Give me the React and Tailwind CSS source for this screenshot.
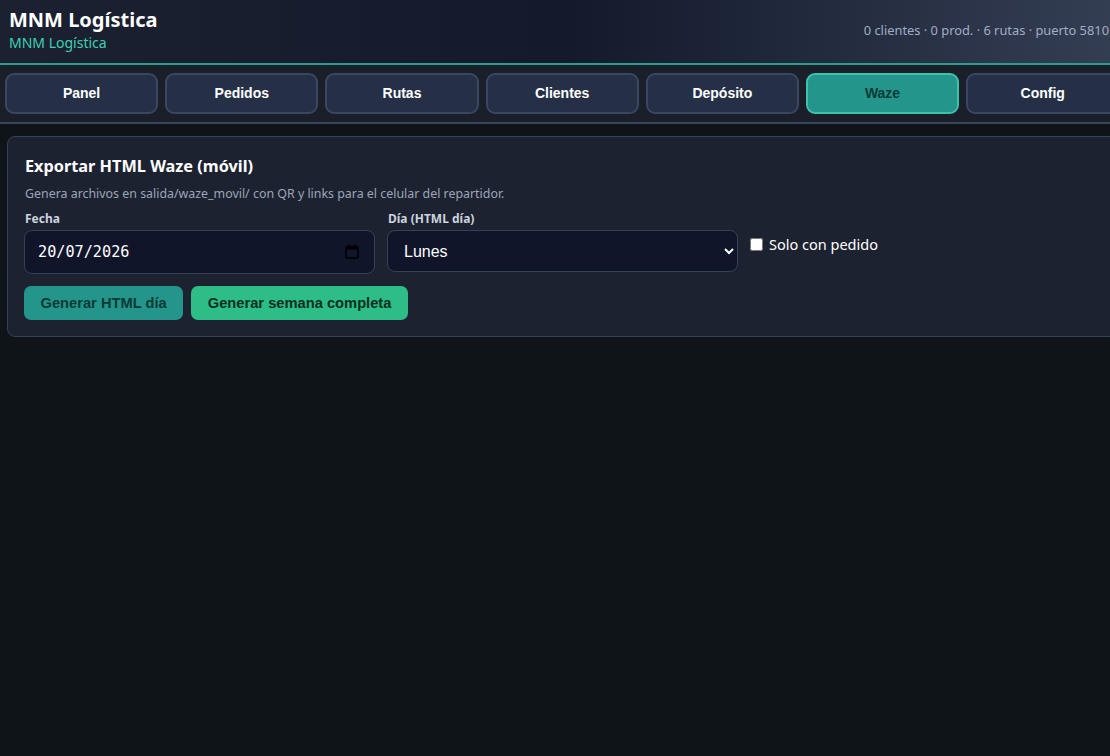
import { useState } from "react";

const tabs = ["Panel", "Pedidos", "Rutas", "Clientes", "Depósito", "Waze", "Config"];

const CalendarIcon = () => (
    <svg width="14" height="15" viewBox="0 0 14 15" fill="none" className="absolute right-[16px] top-[14px] pointer-events-none">
        <rect x="3" y="0.5" width="1.6" height="3" fill="#000" />
        <rect x="9.4" y="0.5" width="1.6" height="3" fill="#000" />
        <rect x="1" y="2.5" width="12" height="11.5" rx="1" stroke="#000" strokeWidth="1.6" />
        <rect x="1" y="2.5" width="12" height="3" fill="#000" />
    </svg>
);

const App = () => {
    const [active, setActive] = useState("Waze");
    const [fecha, setFecha] = useState("20/07/2026");
    const [dia, setDia] = useState("Lunes");
    const [soloPedido, setSoloPedido] = useState(false);

    return (
        <div className="w-full h-screen overflow-hidden bg-[#0f1418]">
        <div className="w-[1130px] h-full bg-[#0f1418] font-['Noto_Sans',sans-serif]">
            {/* header */}
            <header className="h-[65px] flex justify-between items-start px-[9px] pr-[21px] border-b-2 border-[#2a9d8f] bg-gradient-to-r from-[#1b2130] via-[#141a2c] to-[#353f54]">
                <div className="pt-[7px]">
                    <h1 className="text-[20px] leading-[26px] font-bold text-white">MNM Logística</h1>
                    <p className="text-[14px] leading-[18px] text-[#3fd0b4] mt-[1px]">MNM Logística</p>
                </div>
                <div className="pt-[21px] text-[12.85px] text-[#a0aec4]">
                    0 clientes · 0 prod. · 6 rutas · puerto 5810
                </div>
            </header>

            {/* tabs */}
            <nav className="flex gap-[7px] px-[5px] pt-[8px] pb-[8px] bg-[#1a1f29] border-b-2 border-[#3a4560]">
                {tabs.map((t) => (
                    <button
                        key={t}
                        onClick={() => setActive(t)}
                        className={
                            t === active
                                ? "w-[153.2px] h-[41px] rounded-[9px] border-2 border-[#3cc4ab] bg-[#23958a] text-[#0d3a36] text-[14px] font-bold font-['Liberation_Sans',sans-serif]"
                                : "w-[153.2px] h-[41px] rounded-[9px] border-2 border-[#3b4762] bg-[#253046] text-white text-[14px] font-bold font-['Liberation_Sans',sans-serif]"
                        }
                    >
                        {t}
                    </button>
                ))}
            </nav>

            {/* card */}
            <main className="px-[7px] pt-[12px]">
                <section className="rounded-[8px] border border-[#354159] bg-[#1d2230] px-[16px] pt-[18px] pb-[16px]">
                    <h2 className="text-[16.3px] leading-[22px] font-bold text-white pl-[1px]">Exportar HTML Waze (móvil)</h2>
                    <p className="text-[12.4px] leading-[16px] text-[#9aa6b8] mt-[9px] pl-[1px]">
                        Genera archivos en salida/waze_movil/ con QR y links para el celular del repartidor.
                    </p>

                    <div className="flex items-start gap-[12px] mt-[9px]">
                        <div className="flex flex-col w-[351px]">
                            <label className="text-[12px] leading-[16px] font-bold text-[#cbd3df] mb-[3px] pl-[1px]">Fecha</label>
                            <div className="relative">
                                <input
                                    type="text"
                                    value={fecha}
                                    onChange={(e) => setFecha(e.target.value)}
                                    className="w-full h-[44px] rounded-[8px] border border-[#354159] bg-[#10152a] pl-[13px] pr-[40px] text-[15.2px] text-white font-['DejaVu_Sans_Mono',monospace] outline-none"
                                />
                                <CalendarIcon />
                            </div>
                        </div>
                        <div className="flex flex-col w-[351px]">
                            <label className="text-[12px] leading-[16px] font-bold text-[#cbd3df] mb-[3px] pl-[1px]">Día (HTML día)</label>
                            <select
                                value={dia}
                                onChange={(e) => setDia(e.target.value)}
                                className="h-[42px] rounded-[8px] border border-[#354159] bg-[#10152a] pl-[12px] pr-[8px] text-[16px] text-white font-['Liberation_Sans',sans-serif] [color-scheme:dark] outline-none"
                            >
                                {["Lunes", "Martes", "Miércoles", "Jueves", "Viernes", "Sábado"].map((d) => (
                                    <option key={d}>{d}</option>
                                ))}
                            </select>
                        </div>
                        <label className="flex items-center gap-[6px] mt-[23px] text-[14.5px] text-white cursor-pointer">
                            <input
                                type="checkbox"
                                checked={soloPedido}
                                onChange={(e) => setSoloPedido(e.target.checked)}
                                className="w-[13px] h-[13px] accent-white"
                            />
                            Solo con pedido
                        </label>
                    </div>

                    <div className="flex gap-[8px] mt-[12px]">
                        <button className="h-[34px] px-[16.5px] rounded-[7px] bg-[#23958a] text-[#0d3a36] text-[14.7px] font-bold font-['Liberation_Sans',sans-serif]">
                            Generar HTML día
                        </button>
                        <button className="h-[34px] px-[16.5px] rounded-[7px] bg-[#2dbd86] text-[#0b2e22] text-[14.7px] font-bold font-['Liberation_Sans',sans-serif]">
                            Generar semana completa
                        </button>
                    </div>
                </section>
            </main>
        </div>
        </div>
    );
};

export default App;
